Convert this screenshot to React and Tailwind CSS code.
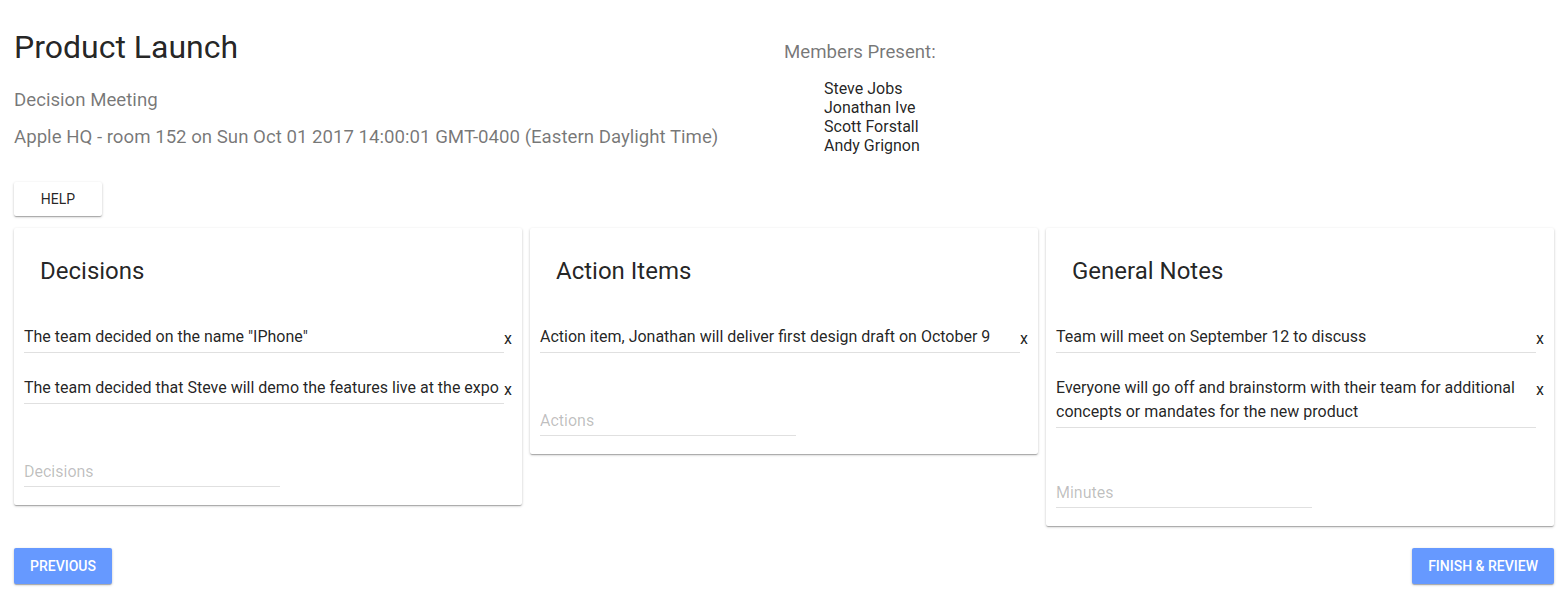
import React from "react";

const cardShadow =
  "shadow-[0_1px_3px_0_rgba(0,0,0,0.2),0_1px_1px_0_rgba(0,0,0,0.14),0_2px_1px_-1px_rgba(0,0,0,0.12)]";

function Item({ text }) {
  return (
    <div className="flex items-start">
      <div className="flex-1 pt-[23px] pb-[3px] border-b border-[#e0e0e0] text-[16px] leading-[24px] text-[rgba(0,0,0,0.87)]">
        {text}
      </div>
      <div className="w-2 pt-[25px] text-[16px] leading-[24px] text-[rgba(0,0,0,0.87)] text-right">x</div>
    </div>
  );
}

function Card({ title, items, placeholder, gap }) {
  return (
    <div className={`w-[508px] bg-white rounded-[2px] p-[10px] ${cardShadow}`}>
      <div className="px-4 pt-[17px] pb-[15px] text-[24px] leading-[32px] text-[rgba(0,0,0,0.87)]">{title}</div>
      {items.map((t, i) => (
        <Item key={i} text={t} />
      ))}
      <div
        className={`${gap} mb-2 w-[256px] pb-[2px] border-b border-[#e0e0e0] text-[16px] leading-[24px] text-[rgba(0,0,0,0.26)]`}
      >
        {placeholder}
      </div>
    </div>
  );
}

export default function App() {
  return (
    <div className="min-h-[602px] bg-white font-['Roboto',sans-serif] pl-[14px] pr-[7px]">
      <div className="flex">
        <div className="w-[770px] pt-[27px]">
          <h1 className="text-[32px] leading-[40px] text-[rgba(0,0,0,0.87)]">Product Launch</h1>
          <div className="mt-[21px] text-[18.67px] leading-[24px] text-[rgba(0,0,0,0.54)]">Decision Meeting</div>
          <div className="mt-[13px] text-[18.67px] leading-[24px] text-[rgba(0,0,0,0.54)]">
            Apple HQ - room 152 on Sun Oct 01 2017 14:00:01 GMT-0400 (Eastern Daylight Time)
          </div>
        </div>
        <div className="pt-[40px]">
          <div className="text-[18.67px] leading-[24px] text-[rgba(0,0,0,0.54)]">Members Present:</div>
          <ul className="mt-[15px] pl-10 text-[16px] leading-[19px] text-[rgba(0,0,0,0.87)]">
            <li>Steve Jobs</li>
            <li>Jonathan Ive</li>
            <li>Scott Forstall</li>
            <li>Andy Grignon</li>
          </ul>
        </div>
      </div>
      <button
        className={`mt-[27px] min-w-[88px] h-[34px] px-4 bg-white rounded-[2px] text-[14px] uppercase text-[rgba(0,0,0,0.87)] ${cardShadow}`}
      >
        Help
      </button>
      <div className="mt-3 flex items-start gap-2">
        <Card
          title="Decisions"
          items={[
            'The team decided on the name "IPhone"',
            "The team decided that Steve will demo the features live at the expo",
          ]}
          placeholder="Decisions"
          gap="mt-[56px]"
        />
        <Card
          title="Action Items"
          items={["Action item, Jonathan will deliver first design draft on October 9"]}
          placeholder="Actions"
          gap="mt-[56px]"
        />
        <Card
          title="General Notes"
          items={[
            "Team will meet on September 12 to discuss",
            "Everyone will go off and brainstorm with their team for additional concepts or mandates for the new product",
          ]}
          placeholder="Minutes"
          gap="mt-[53px]"
        />
      </div>
      <div className="mt-[22px] flex justify-between w-[1540px]">
        <button
          className={`h-[36px] px-4 bg-[#6699ff] rounded-[2px] text-[14px] font-medium uppercase text-white ${cardShadow}`}
        >
          Previous
        </button>
        <button
          className={`h-[36px] px-4 bg-[#6699ff] rounded-[2px] text-[14px] font-medium uppercase text-white ${cardShadow}`}
        >
          Finish &amp; Review
        </button>
      </div>
    </div>
  );
}
